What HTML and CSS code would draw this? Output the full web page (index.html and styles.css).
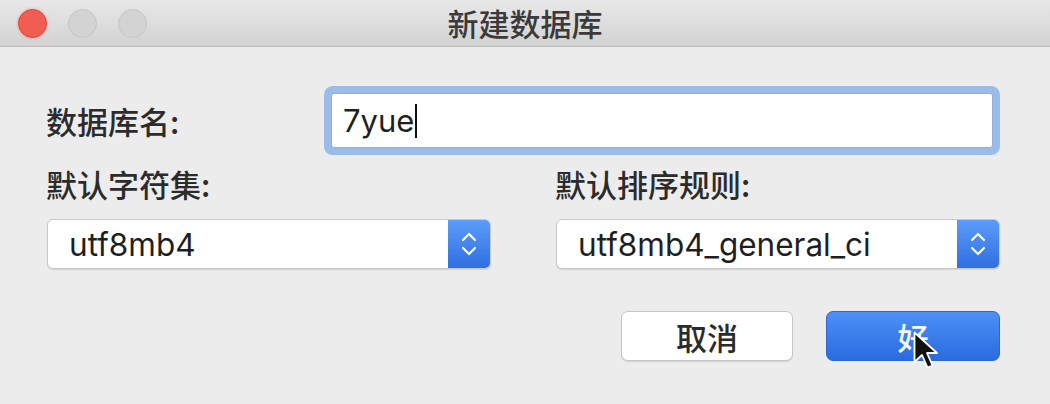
FILE: index.html
```html
<!DOCTYPE html>
<html lang="zh">
<head>
<meta charset="utf-8">
<title>新建数据库</title>
<link rel="stylesheet" href="styles.css">
</head>
<body>
<div class="window">
  <div class="titlebar">
    <div class="lights">
      <span class="light red"></span>
      <span class="light gray"></span>
      <span class="light gray"></span>
    </div>
    <div class="title">新建数据库</div>
    <div class="spacer"></div>
  </div>
  <div class="content">
    <div class="row-name">
      <div class="label name-label">数据库名:</div>
      <div class="input"><span class="input-text">7yue</span><span class="caret"></span></div>
    </div>
    <div class="grid">
      <div class="col">
        <div class="label">默认字符集:</div>
        <div class="select">
          <span class="select-text">utf8mb4</span>
          <span class="stepper"><svg width="20" height="28" viewBox="0 0 20 28"><path d="M4 10 L10 4 L16 10 M4 18 L10 24 L16 18" fill="none" stroke="#fff" stroke-width="2.2" stroke-linecap="round" stroke-linejoin="round"/></svg></span>
        </div>
      </div>
      <div class="col">
        <div class="label">默认排序规则:</div>
        <div class="select">
          <span class="select-text">utf8mb4_general_ci</span>
          <span class="stepper"><svg width="20" height="28" viewBox="0 0 20 28"><path d="M4 10 L10 4 L16 10 M4 18 L10 24 L16 18" fill="none" stroke="#fff" stroke-width="2.2" stroke-linecap="round" stroke-linejoin="round"/></svg></span>
        </div>
      </div>
    </div>
    <div class="buttons">
      <div class="btn cancel">取消</div>
      <div class="btn ok">好</div>
    </div>
  </div>
  <svg class="cursor" width="28" height="42" viewBox="0 0 28 42"><path d="M1.5 1.5 L1.5 31 L9 24 L14.5 36.5 L19.5 34.5 L14 22 L24 22 Z" fill="#111" stroke="#fff" stroke-width="1.8" stroke-linejoin="round"/></svg>
</div>
</body>
</html>
```
FILE: styles.css
```css
html, body {
  margin: 0;
  padding: 0;
}
body {
  width: 1050px;
  height: 404px;
  overflow: hidden;
  background: #ececec;
  font-family: "Inter", "Noto Sans CJK SC", sans-serif;
  color: #1f1f1f;
}
.window {
  position: relative;
  width: 1050px;
  height: 404px;
}
.titlebar {
  height: 46px;
  display: grid;
  grid-template-columns: 1fr auto 1fr;
  align-items: center;
  background: linear-gradient(#e9e8e9, #d3d2d3);
  border-bottom: 1px solid #bdbdbd;
}
.lights {
  display: flex;
  gap: 21px;
  padding-left: 18px;
}
.light {
  width: 29px;
  height: 29px;
  border-radius: 50%;
  box-sizing: border-box;
}
.light.red {
  background: #f15c53;
  border: 1px solid #e0443c;
  box-shadow: 0 0 3px rgba(240, 100, 90, 0.5);
}
.light.gray {
  background: #d3d3d3;
  border: 1px solid #c5c5c5;
}
.title {
  font-family: "Noto Sans CJK SC", sans-serif;
  font-size: 31px;
  font-weight: 500;
  color: #3a3a3a;
  line-height: 46px;
}
.content {
  padding: 0 50px 0 46px;
}
.row-name {
  display: flex;
  align-items: center;
  margin-top: 46px;
}
.label {
  font-family: "Noto Sans CJK SC", sans-serif;
  font-size: 31px;
  font-weight: 500;
  line-height: 36px;
  color: #2b2b2b;
}
.name-label {
  width: 285px;
}
.input {
  width: 662px;
  height: 55px;
  box-sizing: border-box;
  background: #fff;
  border: 1px solid #8fb0dd;
  border-radius: 3px;
  box-shadow: 0 0 0 7px #9bbce8;
  display: flex;
  align-items: center;
  padding-left: 11px;
}
.input-text {
  font-size: 31px;
  color: #1f1f1f;
}
.caret {
  width: 2px;
  height: 34px;
  background: #111;
  margin-left: 1px;
}
.grid {
  display: grid;
  grid-template-columns: 445px 445px;
  column-gap: 64px;
  margin-top: 18px;
}
.col .label {
  margin-bottom: 17px;
}
.col + .col .select {
  margin-left: 1px;
}
.select {
  height: 50px;
  box-sizing: border-box;
  background: #fff;
  border: 1px solid #c9c9c9;
  border-radius: 6px;
  box-shadow: 0 1px 1px rgba(0,0,0,0.12);
  display: flex;
  align-items: center;
  overflow: hidden;
}
.col:first-child .select {
  margin-left: 1px;
  width: 444px;
}
.select-text {
  flex: 1;
  padding-left: 21px;
  font-size: 31.5px;
  color: #1f1f1f;
}
.stepper {
  width: 42px;
  height: 100%;
  background: linear-gradient(#5c9cf8, #2f6fe2);
  display: flex;
  align-items: center;
  justify-content: center;
}
.buttons {
  display: flex;
  justify-content: flex-end;
  gap: 33px;
  margin-top: 42px;
}
.btn {
  height: 50px;
  box-sizing: border-box;
  border-radius: 7px;
  display: flex;
  align-items: center;
  justify-content: center;
  font-family: "Noto Sans CJK SC", sans-serif;
  font-size: 31px;
  font-weight: 500;
}
.cancel {
  width: 172px;
  background: #fff;
  border: 1px solid #c6c6c6;
  box-shadow: 0 1px 1px rgba(0,0,0,0.12);
  color: #2b2b2b;
}
.ok {
  width: 174px;
  background: linear-gradient(#4d90f6, #2a6bdf);
  border: 1px solid #2c67d0;
  color: #f4f7ff;
}
.cursor {
  position: absolute;
  left: 913px;
  top: 331px;
}
```
